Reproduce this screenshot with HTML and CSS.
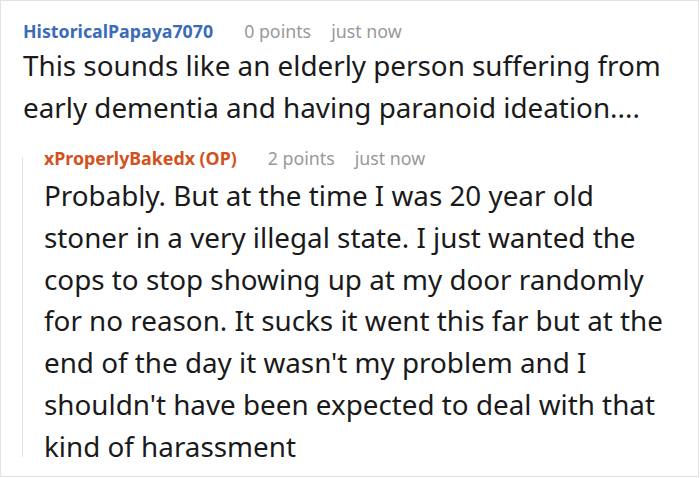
FILE: index.html
```html
<!DOCTYPE html>
<html>
<head>
<meta charset="utf-8">
<link rel="stylesheet" href="styles.css">
</head>
<body>
<div class="frame">
  <div class="comment">
    <div class="meta">
      <span class="author">HistoricalPapaya7070</span>
      <span class="info">0 points</span>
      <span class="info">just now</span>
    </div>
    <div class="body">This sounds like an elderly person suffering from early dementia and having paranoid ideation....</div>
    <div class="reply">
      <div class="meta">
        <span class="author op">xProperlyBakedx (OP)</span>
        <span class="info">2 points</span>
        <span class="info">just now</span>
      </div>
      <div class="body reply-body">Probably. But at the time I was 20 year old stoner in a very illegal state. I just wanted the cops to stop showing up at my door randomly for no reason. It sucks it went this far but at the end of the day it wasn't my problem and I shouldn't have been expected to deal with that kind of harassment</div>
    </div>
  </div>
</div>
</body>
</html>
```
FILE: styles.css
```css
html, body { margin: 0; padding: 0; background: #fff; }
.frame {
  width: 699px;
  height: 477px;
  box-sizing: border-box;
  border: 1px solid #e2e2e2;
  overflow: hidden;
  font-family: "Noto Sans", "Open Sans", sans-serif;
  color: #1a1a1b;
}
.comment { padding: 18px 13px 0 22px; }
.meta { display: flex; font-size: 17.8px; line-height: 24px; }
.author { font-weight: 700; color: #3a6cb8; margin-right: 31px; }
.author.op { color: #d4511d; }
.info { color: #999; margin-right: 20px; }
.body { font-size: 27.8px; line-height: 41.7px; margin-top: 2.4px; }
.reply {
  position: relative;
  margin-top: 17.2px;
  padding-left: 21px;
}
.reply::before {
  content: "";
  position: absolute;
  left: -1px;
  top: 11px;
  bottom: 10px;
  border-left: 1px solid #e3e3e3;
}
.reply-body { margin-top: 5.4px; }
```
